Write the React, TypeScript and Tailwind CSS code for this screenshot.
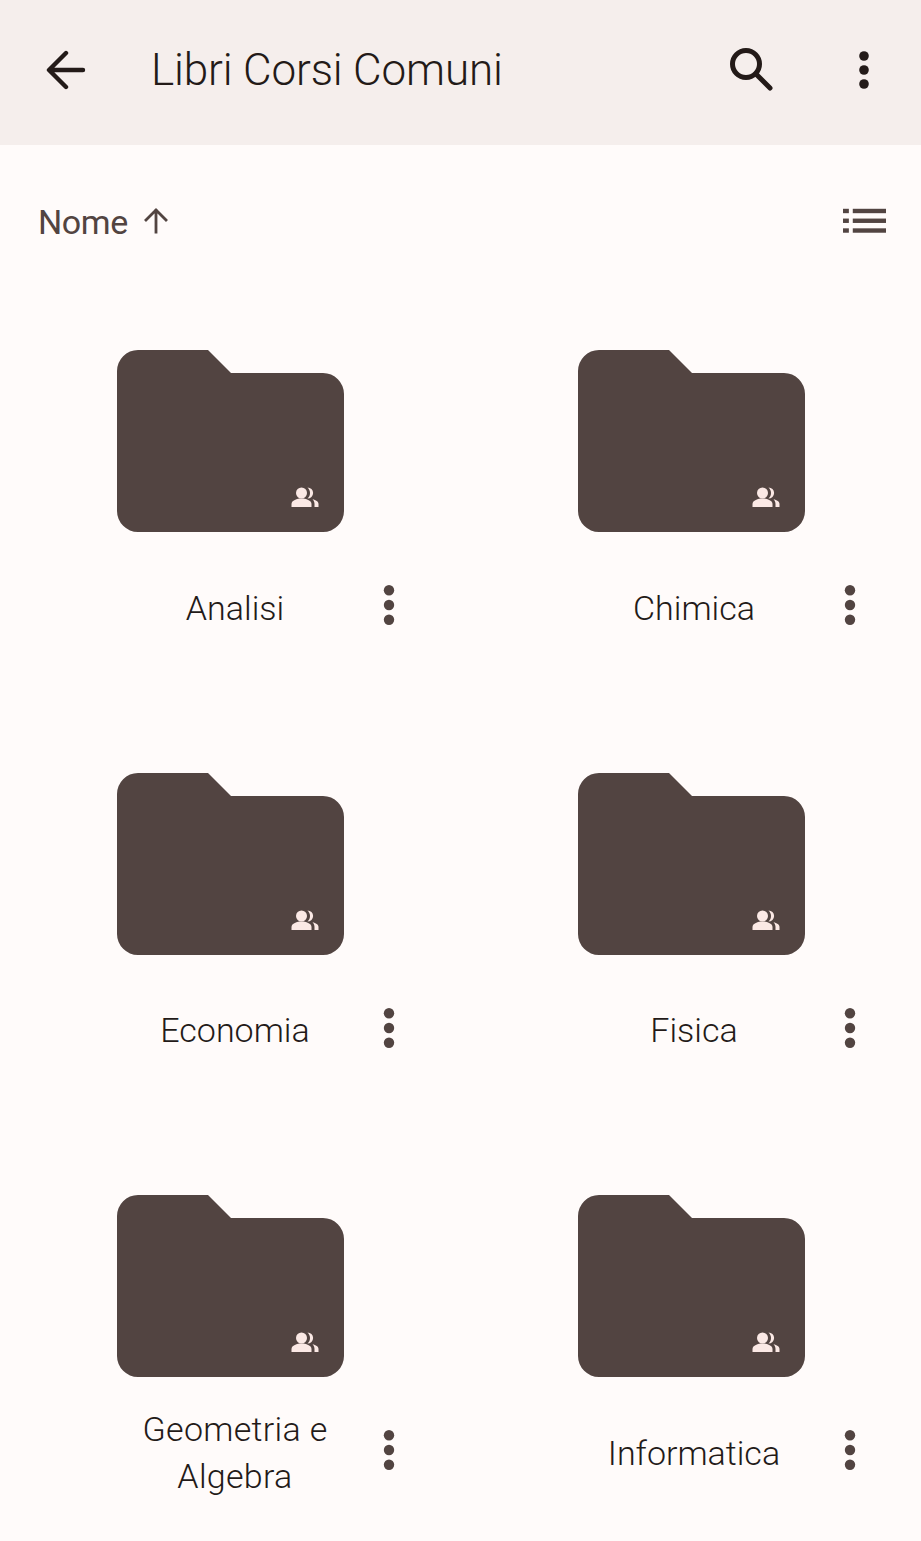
import React from "react";

const MoreVert = ({ className, r = 4.8, gap = 14 }: { className: string; r?: number; gap?: number }) => (
  <svg viewBox="0 0 14 44" className={className} fill="currentColor">
    <circle cx="7" cy={22 - gap} r={r} />
    <circle cx="7" cy="22" r={r} />
    <circle cx="7" cy={22 + gap} r={r} />
  </svg>
);

const Folder = () => (
  <svg viewBox="0 0 227 182" className="block h-[182px] w-[227px]">
    <path
      d="M21 0H91L114 23H206A21 21 0 0 1 227 44V161A21 21 0 0 1 206 182H21A21 21 0 0 1 0 161V21A21 21 0 0 1 21 0Z"
      fill="#524441"
    />
    <g fill="#fbe9e5">
      <circle cx="184.500" cy="143" r="5.500" />
      <path d="M174.500 157V154C174.500 150.500 180 148.600 184.500 148.600C189 148.600 194.500 150.500 194.500 154V157Z" />
      <path d="M190.500 137.400A5.600 5.600 0 0 1 190.500 148.600C192.300 147 193 145 193 143C193 141 192.300 139 190.500 137.400Z" />
      <path d="M195.500 149.300C198.800 150 201.500 151.500 201.500 154V157H197.500V154C197.500 152.200 196.800 150.600 195.500 149.300Z" />
    </g>
  </svg>
);

const items = [
  { name: "Analisi" },
  { name: "Chimica" },
  { name: "Economia" },
  { name: "Fisica" },
  { name: "Geometria e Algebra", multi: true },
  { name: "Informatica" },
];

export default function App() {
  return (
    <div className="h-[1541px] w-[921px] overflow-hidden bg-[#fffbfa] font-['Roboto',sans-serif]">
      <header className="flex h-[145px] items-center bg-[#f5eeec] pb-[6px] text-[#231a18]">
        <svg viewBox="0 0 40 40" className="ml-[46px] h-[40px] w-[40px]" fill="none" stroke="currentColor" strokeWidth="4.400" strokeLinecap="round" strokeLinejoin="round">
          <path d="M37 20H4M20 3L3 20L20 37" />
        </svg>
        <h1 className="ml-[65px] flex-1 text-[44px] font-[350] leading-none tracking-[-0.15px]">Libri Corsi Comuni</h1>
        <svg viewBox="0 0 44 44" className="mr-[83px] h-[44px] w-[44px]" fill="none" stroke="currentColor" strokeWidth="5" strokeLinecap="round">
          <circle cx="16" cy="16" r="13.500" />
          <path d="M26 26L40 40" />
        </svg>
        <MoreVert className="mr-[50px] h-[44px] w-[14px]" />
      </header>
      <div className="mb-[51px] flex h-[154px] items-center justify-between pl-[38px] pr-[35px] text-[#524441]">
        <div className="flex items-center">
          <span className="text-[34px] font-normal leading-none tracking-[-0.4px]">Nome</span>
          <svg viewBox="0 0 26 26" className="ml-[15px] h-[26px] w-[26px] -translate-y-[1px]" fill="none" stroke="currentColor" strokeWidth="2.800" strokeLinecap="square">
            <path d="M13 24V2.500M3 12L13 2L23 12" />
          </svg>
        </div>
        <svg viewBox="0 0 44 26" className="h-[26px] w-[43px] -translate-y-[1px]" fill="currentColor">
          <rect x="0" y="0.500" width="6" height="4.500" />
          <rect x="0" y="10.500" width="6" height="4.500" />
          <rect x="0" y="20.500" width="6" height="4.500" />
          <rect x="10" y="0.500" width="34" height="4.500" />
          <rect x="10" y="10.500" width="34" height="4.500" />
          <rect x="10" y="20.500" width="34" height="4.500" />
        </svg>
      </div>
      <main className="grid grid-cols-[461px_460px] auto-rows-[422.5px]">
        {items.map((it, i) => (
          <div key={it.name} className="pl-[117px]">
            <Folder />
            <div className={`${i % 2 === 0 ? "" : "-ml-[2px]"} mt-[27px] flex h-[94px] items-center`}>
              <div className={`w-[236px] text-center text-[34px] font-[350] leading-[47px] text-[#231a18] ${it.multi ? "translate-y-[1.5px] tracking-[0.3px]" : "translate-y-[2px]"}`}>
                {it.multi ? (
                  <>
                    Geometria e
                    <br />
                    Algebra
                  </>
                ) : (
                  it.name
                )}
              </div>
              <MoreVert className={`${i % 2 === 0 ? "ml-[29px]" : "ml-[31px]"} h-[44px] w-[14px] -translate-y-[1px] text-[#524441]`} r={5.200} gap={14.800} />
            </div>
          </div>
        ))}
      </main>
    </div>
  );
}
